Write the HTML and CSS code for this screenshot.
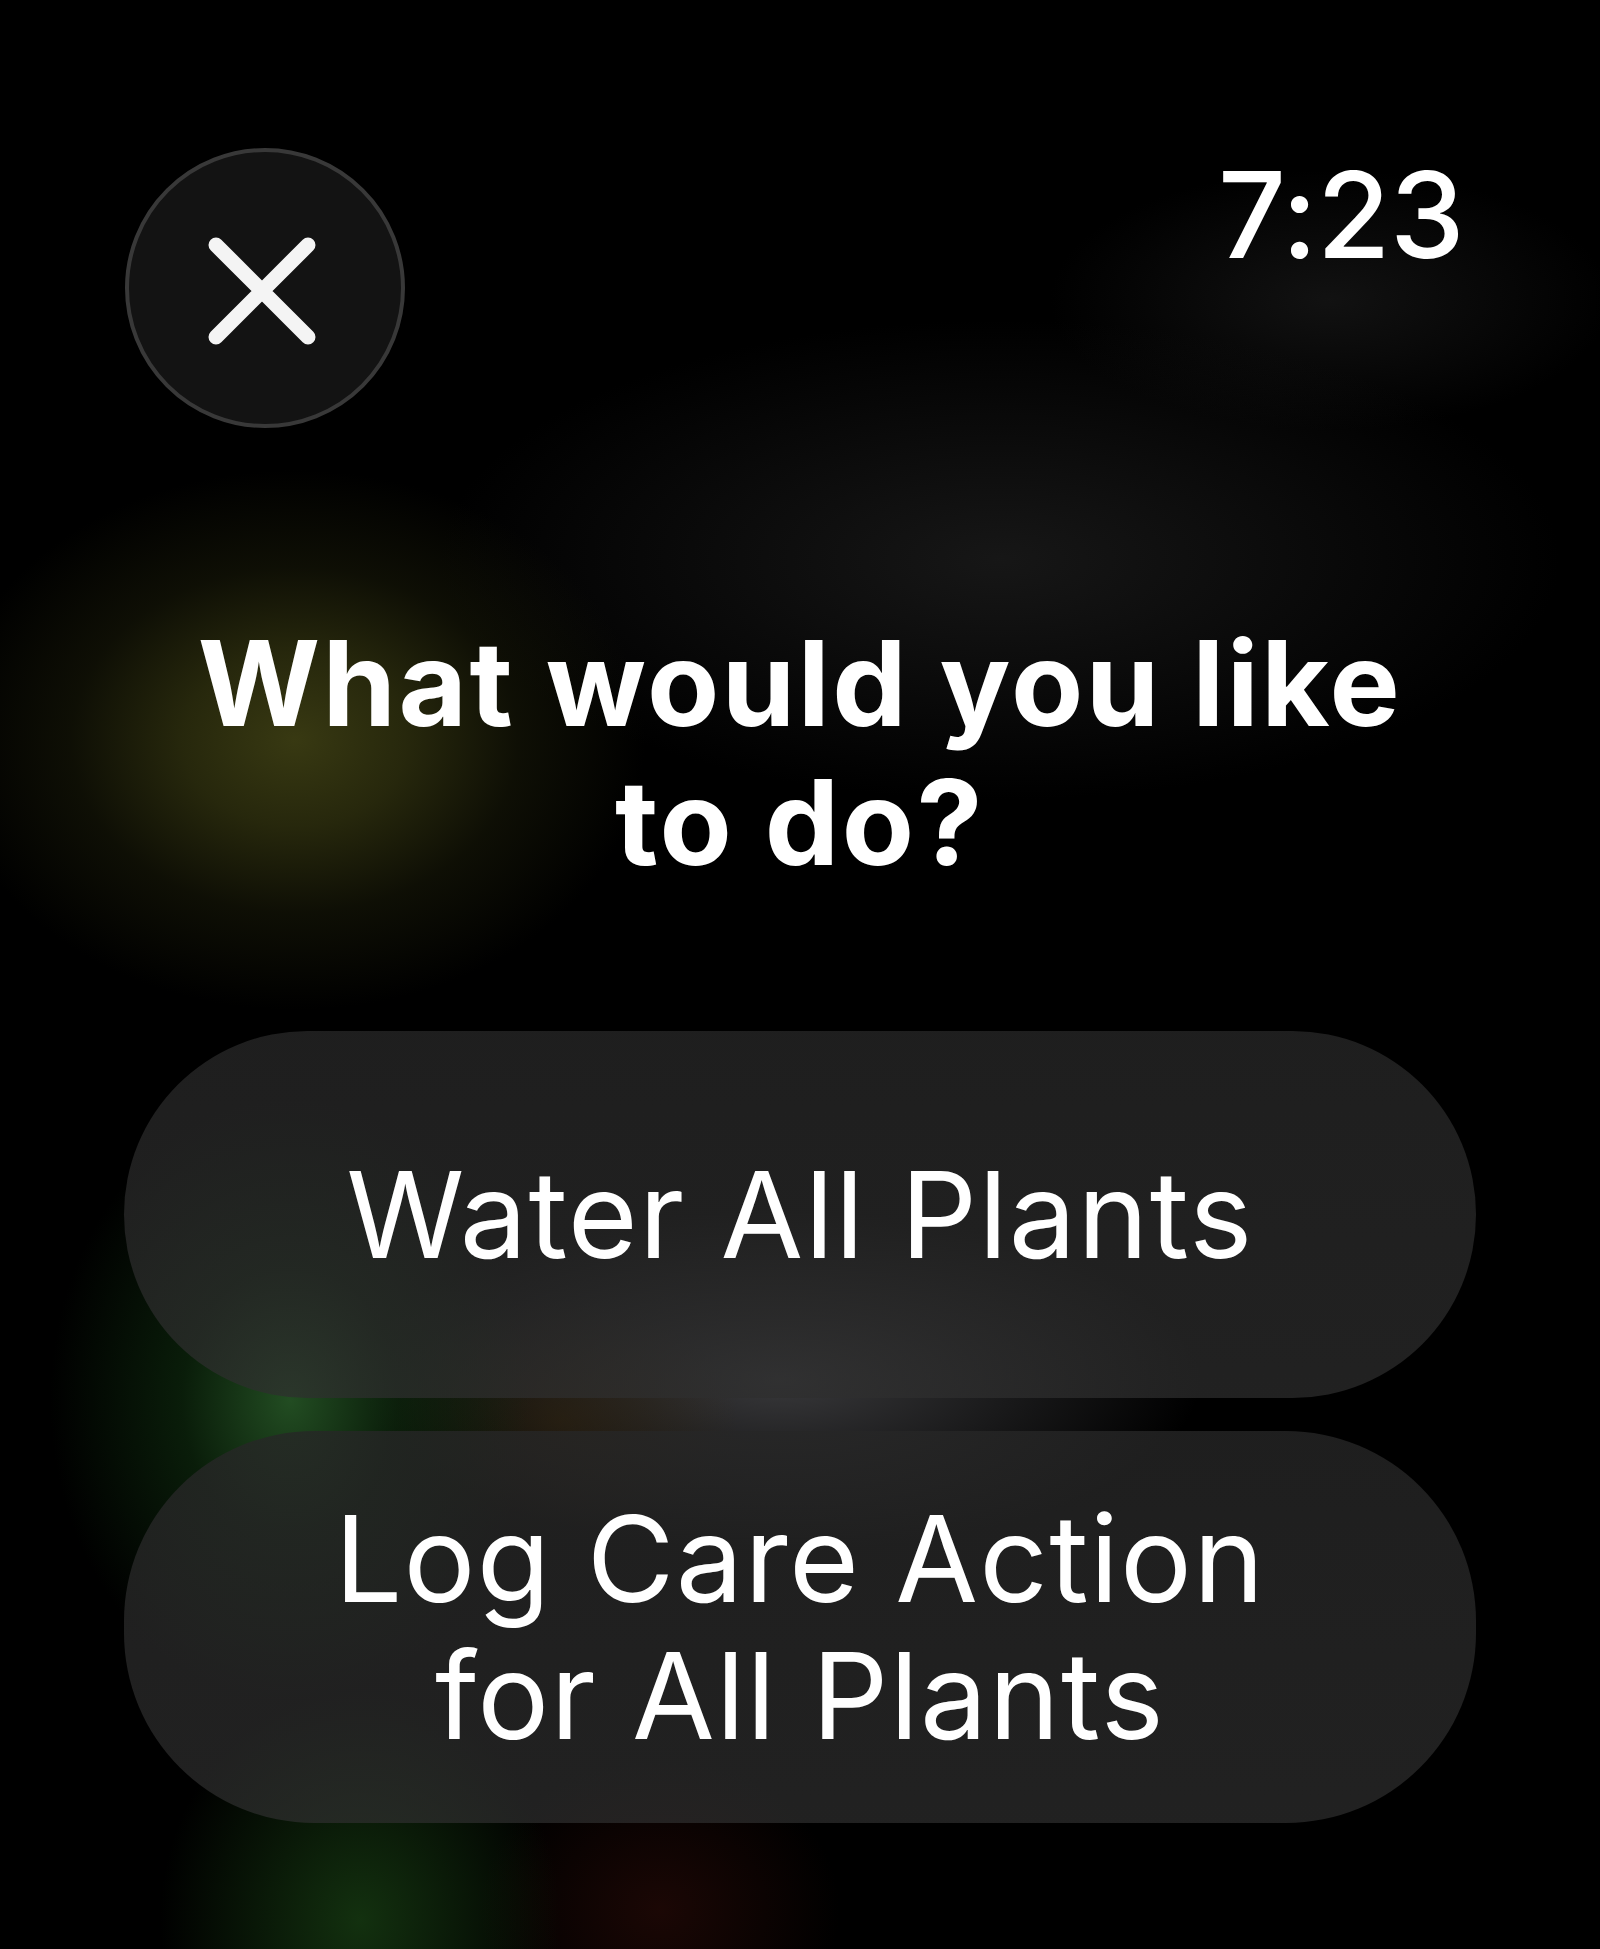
FILE: index.html
```html
<!DOCTYPE html>
<html lang="en">
<head>
<meta charset="utf-8">
<title>What would you like to do?</title>
<link rel="stylesheet" href="styles.css">
</head>
<body>
<div class="screen">
  <header class="top-bar">
    <button class="close-btn" aria-label="Close">
      <svg class="close-icon" viewBox="0 0 280 280" width="280" height="280">
        <path d="M91 97 L183 189 M183 97 L91 189" stroke="#f4f4f4" stroke-width="15" stroke-linecap="round" fill="none"/>
      </svg>
    </button>
    <div class="clock">7:23</div>
  </header>
  <h1 class="title">What would you like<br>to do?</h1>
  <div class="actions">
    <button class="action action-single">Water All Plants</button>
    <button class="action">Log Care Action<br>for All Plants</button>
  </div>
</div>
</body>
</html>
```

FILE: styles.css
```css
* { box-sizing: border-box; }
html, body {
  margin: 0;
  padding: 0;
  background: #000;
}
.screen {
  width: 1600px;
  height: 1949px;
  overflow: hidden;
  font-family: Inter, "Noto Sans", "Liberation Sans", sans-serif;
  color: #fff;
  padding: 148px 124px 0 124px;
  display: flex;
  flex-direction: column;
  background:
    radial-gradient(ellipse 350px 270px at 295px 740px, rgba(56, 57, 18, 1) 0%, rgba(44, 45, 14, 0.88) 32%, rgba(26, 27, 9, 0.55) 64%, rgba(0,0,0,0) 100%),
    radial-gradient(ellipse 560px 240px at 1000px 560px, rgba(28, 28, 28, 0.8), rgba(0,0,0,0) 100%),
    radial-gradient(ellipse 240px 300px at 290px 1400px, rgba(40, 90, 40, 0.85) 0%, rgba(16, 48, 16, 0.6) 45%, rgba(0,0,0,0) 100%),
    radial-gradient(ellipse 200px 230px at 360px 1920px, rgba(25, 65, 20, 0.75), rgba(0,0,0,0) 100%),
    radial-gradient(ellipse 180px 150px at 660px 1910px, rgba(45, 12, 8, 0.6), rgba(0,0,0,0) 100%),
    radial-gradient(ellipse 180px 120px at 560px 1420px, rgba(55, 38, 10, 0.45), rgba(0,0,0,0) 100%),
    radial-gradient(ellipse 420px 170px at 780px 1380px, rgba(75, 75, 78, 0.75), rgba(0,0,0,0) 100%),
    radial-gradient(ellipse 280px 130px at 1330px 300px, rgba(22, 22, 22, 0.8), rgba(0,0,0,0) 100%),
    #000;
}
.top-bar {
  display: flex;
  justify-content: space-between;
  align-items: flex-start;
  padding-right: 12px;
}
.close-btn {
  width: 280px;
  height: 280px;
  margin-left: 1px;
  border-radius: 50%;
  background: #131313;
  border: 4px solid #383838;
  padding: 0;
  display: flex;
  align-items: center;
  justify-content: center;
}
.close-icon {
  display: block;
  width: 280px;
  height: 280px;
  flex: none;
}
.clock {
  font-size: 119px;
  font-weight: 500;
  line-height: 121px;
  margin-top: 7px;
  letter-spacing: -0.5px;
}
.title {
  margin: 186px 0 0 0;
  text-align: center;
  font-size: 118px;
  font-weight: 700;
  line-height: 139px;
  letter-spacing: 2.5px;
}
.actions {
  margin-top: 139px;
  display: flex;
  flex-direction: column;
  gap: 33px;
}
.action {
  font-family: inherit;
  color: #fff;
  font-size: 120px;
  font-weight: 400;
  line-height: 137px;
  letter-spacing: 1.3px;
  text-align: center;
  border: none;
  border-radius: 190px;
  padding: 59px 20px;
  background: linear-gradient(180deg, rgba(38, 38, 38, 0.8) 0%, rgba(46, 46, 46, 0.72) 100%);
  width: 100%;
}
.action-single {
  min-height: 367px;
}
```
